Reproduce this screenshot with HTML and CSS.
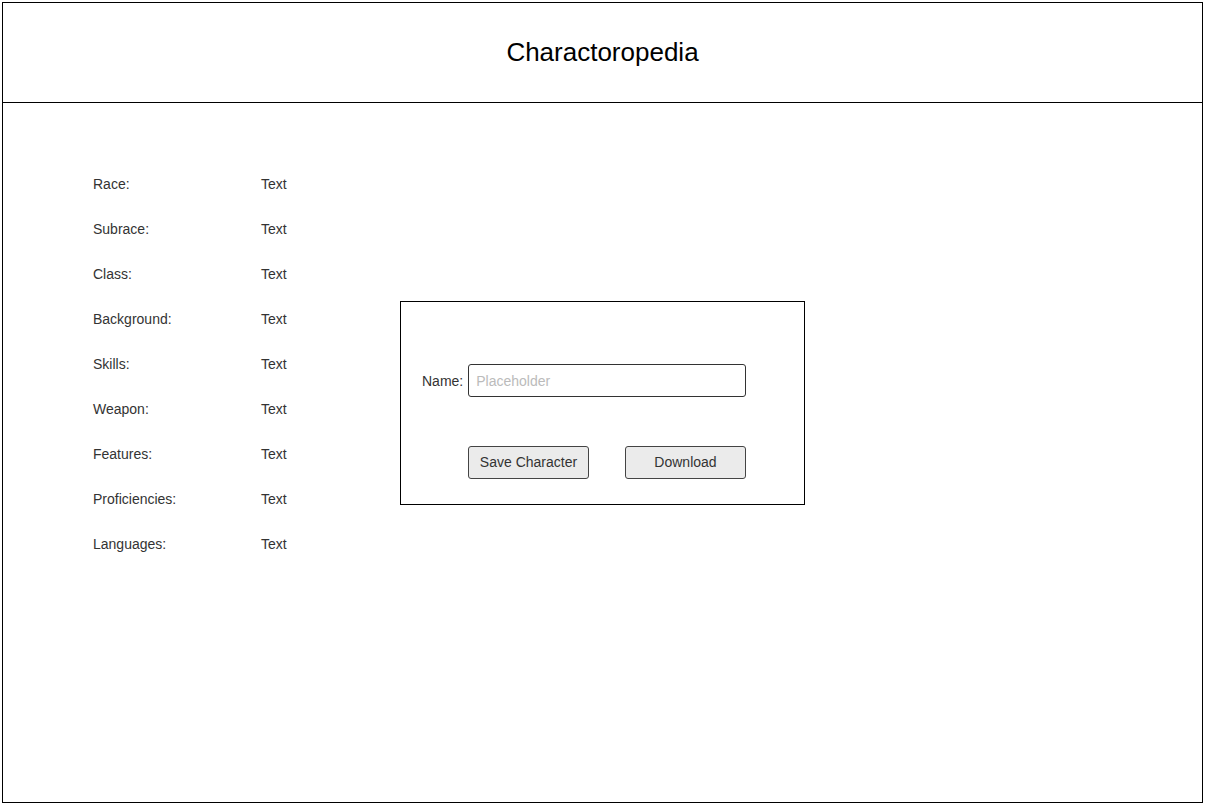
FILE: index.html
```html
<!DOCTYPE html>
<html>
<head>
<meta charset="utf-8">
<title>Charactoropedia</title>
<link rel="stylesheet" href="styles.css">
</head>
<body>
<div class="frame">
  <header class="header"><h1 class="title">Charactoropedia</h1></header>
  <main class="main">
    <div class="details">
      <div class="row"><span class="label">Race:</span><span class="value">Text</span></div>
      <div class="row"><span class="label">Subrace:</span><span class="value">Text</span></div>
      <div class="row"><span class="label">Class:</span><span class="value">Text</span></div>
      <div class="row"><span class="label">Background:</span><span class="value">Text</span></div>
      <div class="row"><span class="label">Skills:</span><span class="value">Text</span></div>
      <div class="row"><span class="label">Weapon:</span><span class="value">Text</span></div>
      <div class="row"><span class="label">Features:</span><span class="value">Text</span></div>
      <div class="row"><span class="label">Proficiencies:</span><span class="value">Text</span></div>
      <div class="row"><span class="label">Languages:</span><span class="value">Text</span></div>
    </div>
    <div class="dialog">
      <div class="name-row">
        <label class="name-label" for="name">Name:</label>
        <input class="name-input" id="name" type="text" placeholder="Placeholder">
      </div>
      <div class="buttons">
        <button class="btn">Save Character</button>
        <button class="btn">Download</button>
      </div>
    </div>
  </main>
</div>
</body>
</html>
```
FILE: styles.css
```css
html, body {
  margin: 0;
  padding: 0;
  background: #fff;
}
body {
  font-family: "Liberation Sans", Arial, sans-serif;
  color: #333;
}
.frame {
  box-sizing: border-box;
  margin: 2px 0 0 2px;
  width: 1201px;
  height: 801px;
  border: 1px solid #000;
  display: flex;
  flex-direction: column;
}
.header {
  box-sizing: border-box;
  height: 100px;
  border-bottom: 1px solid #000;
  display: flex;
  align-items: center;
  justify-content: center;
}
.title {
  margin: 0;
  font-weight: normal;
  font-size: 26px;
  color: #000;
}
.main {
  display: flex;
  align-items: flex-start;
  padding-left: 90px;
}
.details {
  width: 307px;
  padding-top: 59px;
  font-size: 14px;
}
.row {
  display: flex;
  height: 45px;
  line-height: 45px;
}
.label {
  width: 168px;
}
.dialog {
  box-sizing: border-box;
  margin-top: 198px;
  width: 405px;
  height: 204px;
  border: 1px solid #000;
  padding: 62px 0 0 21px;
  font-size: 14px;
}
.name-row {
  display: flex;
  align-items: center;
  gap: 5px;
}
.name-input {
  box-sizing: border-box;
  width: 278px;
  height: 33px;
  border: 1px solid #333;
  border-radius: 3px;
  padding: 0 7px;
  font-family: "Liberation Sans", Arial, sans-serif;
  font-size: 14px;
  color: #333;
  outline: none;
}
.name-input::placeholder {
  color: #bbb;
}
.buttons {
  display: flex;
  gap: 36px;
  padding-left: 46px;
  margin-top: 49px;
}
.btn {
  box-sizing: border-box;
  width: 121px;
  height: 33px;
  background: #ebebeb;
  border: 1px solid #444;
  border-radius: 3px;
  font-family: "Liberation Sans", Arial, sans-serif;
  font-size: 14px;
  color: #333;
  padding: 0 0 1px;
}
```
